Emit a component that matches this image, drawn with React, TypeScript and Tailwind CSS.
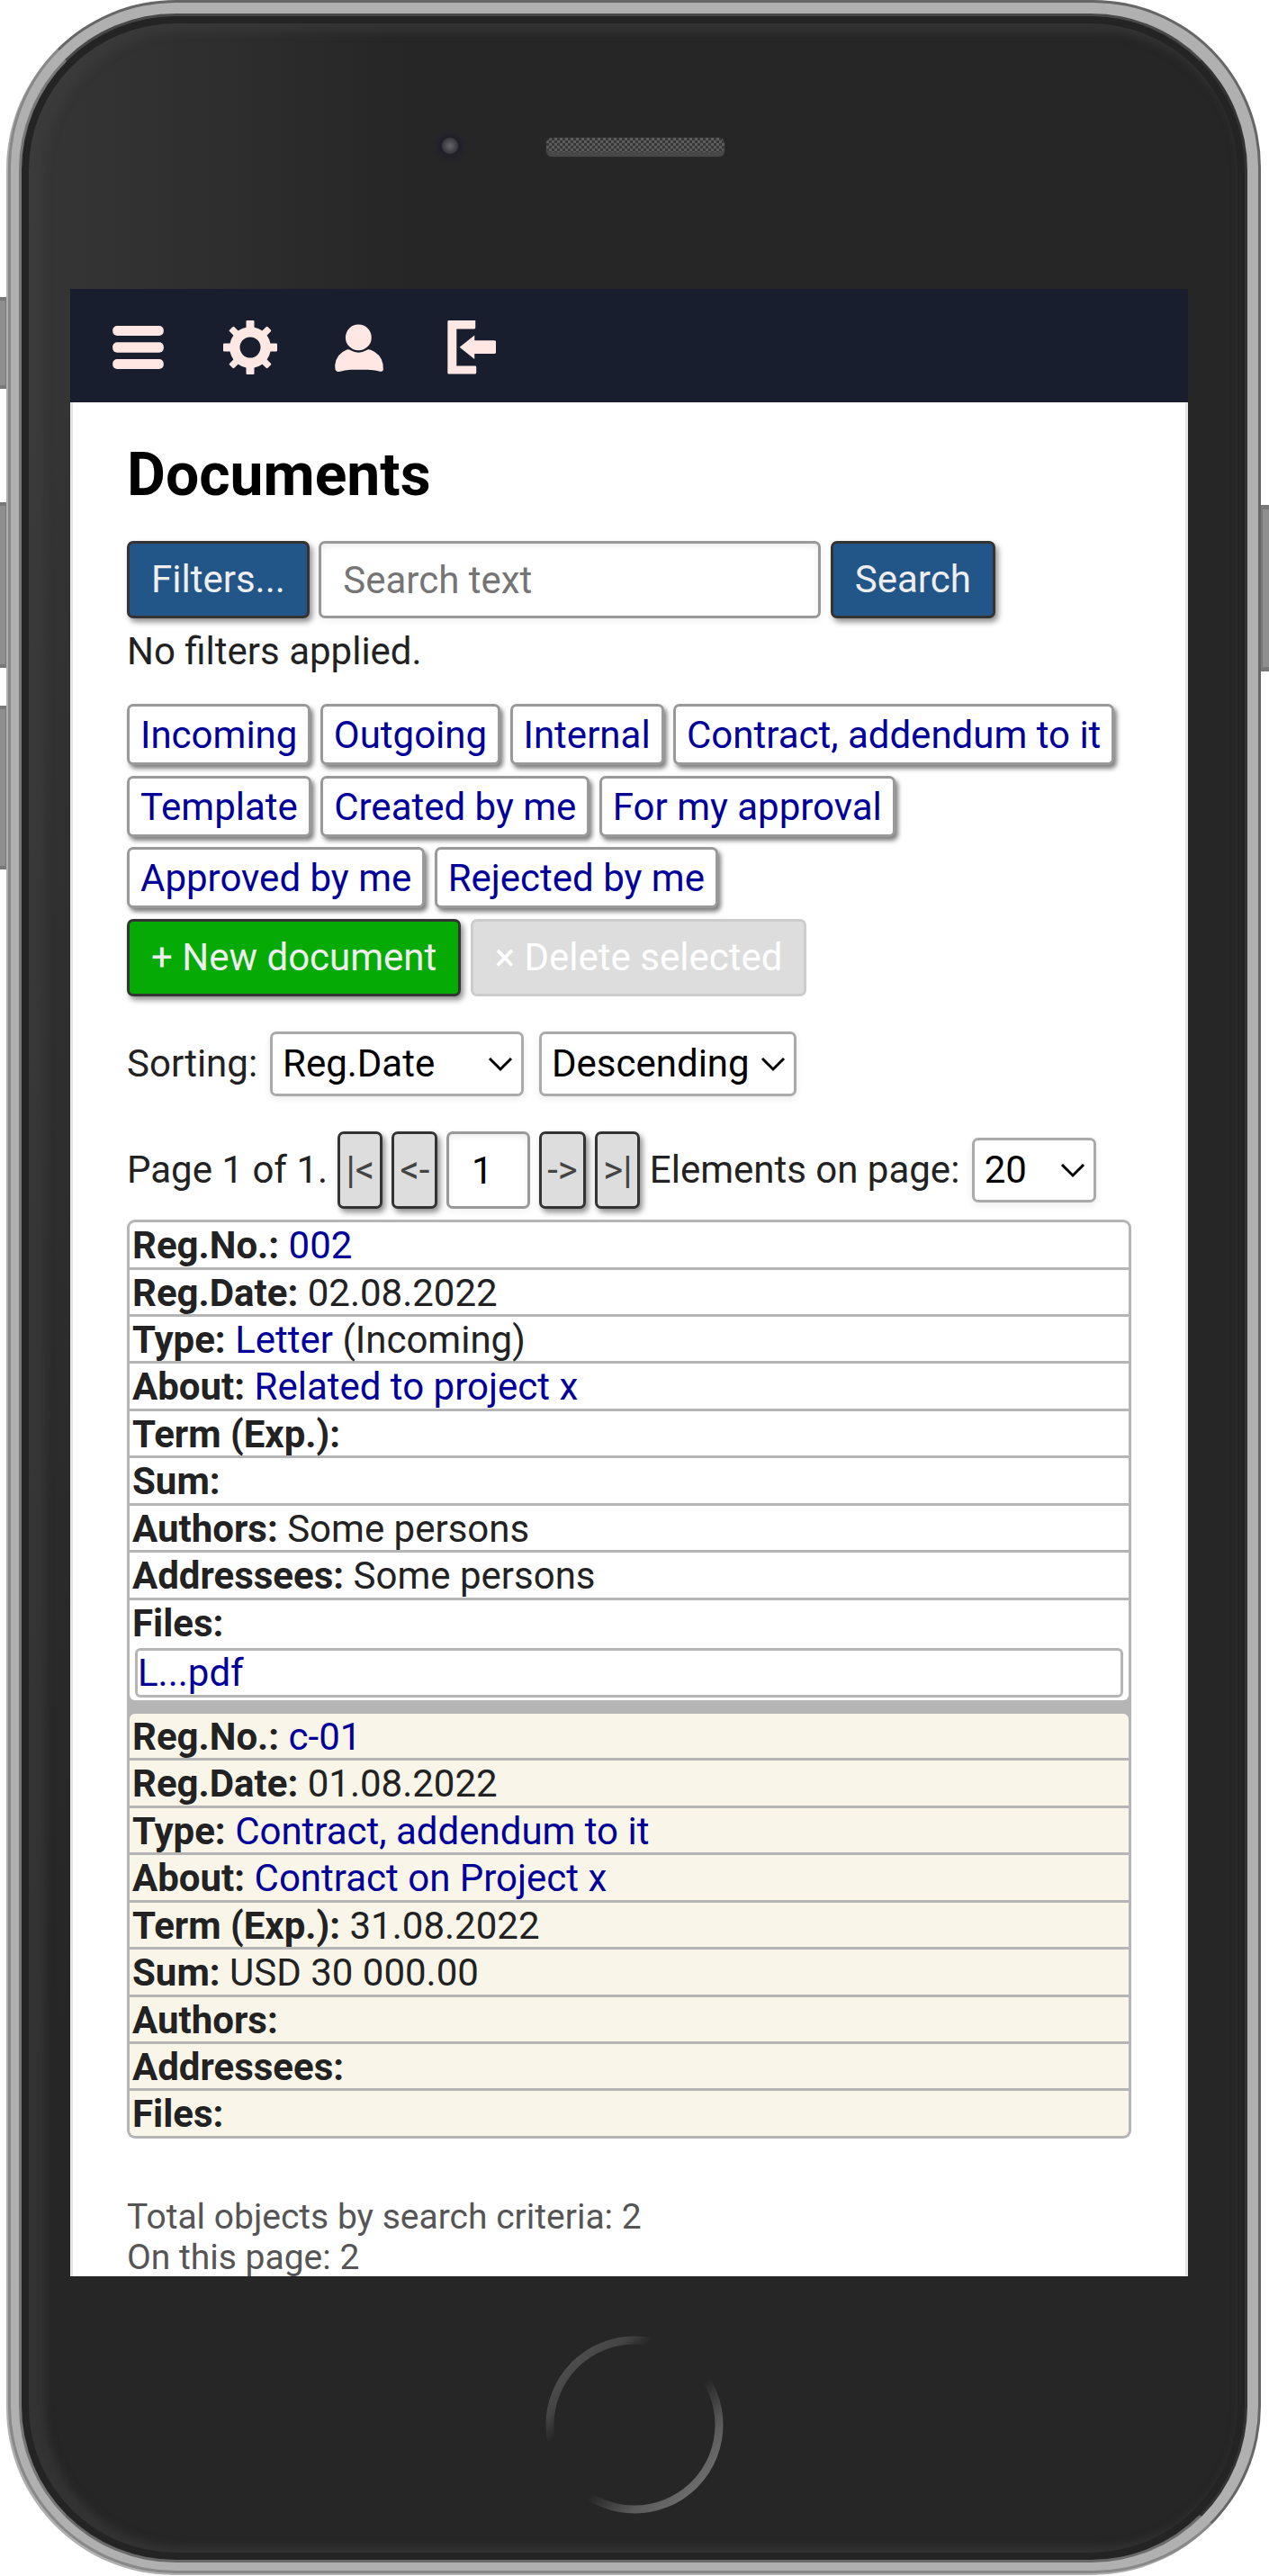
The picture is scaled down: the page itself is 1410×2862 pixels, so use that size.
import type { ReactNode } from "react";

const cx = (...parts: string[]) => parts.join(" ");

/* ---------- header icons ---------- */

function MenuIcon() {
  return (
    <svg className="h-[48px] w-[57px]" viewBox="45 66 170 144" fill="currentColor">
      <rect x="45" y="66" width="170" height="33" rx="15" />
      <rect x="45" y="121" width="170" height="34" rx="15" />
      <rect x="45" y="177" width="170" height="33" rx="15" />
    </svg>
  );
}

function GearIcon() {
  return (
    <svg className="ml-[66px] size-[60px]" viewBox="-90 -90 180 180" fill="currentColor">
      <circle r="51.5" fill="none" stroke="currentColor" strokeWidth="34" />
      {[0, 90, 180, 270].map((a) => (
        <rect key={a} x="-13.5" y="-90" width="27" height="30" rx="3" transform={`rotate(${a})`} />
      ))}
      {[45, 135, 225, 315].map((a) => (
        <rect key={a} x="-11" y="-90" width="22" height="32" rx="4" transform={`rotate(${a})`} />
      ))}
    </svg>
  );
}

function UserIcon() {
  return (
    <svg className="ml-[64px] h-[53px] w-[54px]" viewBox="786 58 162 160" fill="currentColor">
      <circle cx="865" cy="103" r="43.5" />
      <path d="M826 144 Q833 142 839 146 Q852 153 865 153.500 Q879 153 891 146 Q898 141 906 145 Q940 158 947 192 L948 212 Q947 219 937 217 Q912 211 896 211 L839 211 Q820 212 800 218 Q788 219 787 210 L786 196 Q790 158 826 144 Z" />
    </svg>
  );
}

function ExitIcon() {
  return (
    <svg className="ml-[70.5px] h-[60px] w-[54.500px]" viewBox="1160 48 164 180" fill="currentColor">
      <path d="M1165 48 H1254 V72 Q1254 76 1250 76 H1191 V200 H1253 Q1257 200 1257 204 V222 Q1257 227 1252 227 H1165 Q1161 227 1161 223 V52 Q1161 48 1165 48 Z" />
      <path d="M1201 137 L1251 97 V115 H1317 Q1323 115 1323 121 V153 Q1323 159 1317 159 H1251 V177 Z" />
    </svg>
  );
}

/* ---------- controls ---------- */

const buttonBase =
  "flex h-[86px] shrink-0 items-center justify-center rounded-[7px] border-[3px] whitespace-pre";
const raised = "shadow-[3px_4px_6px_rgba(0,0,0,0.45)]";

function Button({ className, children }: { className: string; children: ReactNode }) {
  return <button className={cx(buttonBase, className)}>{children}</button>;
}

const primary = cx("border-[#333] bg-[#225588] px-[24px] text-[#eee]", raised);
const pagerStyle = cx("border-[#333] bg-[#ddd] px-[6px] text-[#444]", raised);

function Chip({ children }: { children: ReactNode }) {
  return (
    <a className="flex h-[68px] items-center rounded-[7px] border-[3px] border-[#999] bg-white px-[12px] pt-[2px] text-[#000099] shadow-[3px_4px_5px_rgba(0,0,0,0.5)]">
      {children}
    </a>
  );
}

function Select({ className, children }: { className: string; children: ReactNode }) {
  return (
    <div
      className={cx(
        "flex h-[72px] shrink-0 items-center justify-between rounded-[7px] border-[3px] border-[#aaa] bg-white pr-[9px] pl-[11px] text-black shadow-[0_3px_8px_rgba(0,0,0,0.08)]",
        className,
      )}
    >
      <span>{children}</span>
      <svg className="h-[18px] w-[28px]" viewBox="0 0 28 18" fill="none" stroke="black" strokeWidth="3">
        <path d="M2 3 L14 15 L26 3" />
      </svg>
    </div>
  );
}

const inputStyle =
  "h-[86px] rounded-[7px] border-[3px] border-[#999] bg-white shadow-[inset_0_3px_6px_rgba(0,0,0,0.08),0_3px_8px_rgba(0,0,0,0.06)]";

/* ---------- records ---------- */

type Field = { label: string; link?: string; text?: string };

const letter: Field[] = [
  { label: "Reg.No.:", link: "002" },
  { label: "Reg.Date:", text: "02.08.2022" },
  { label: "Type:", link: "Letter", text: "(Incoming)" },
  { label: "About:", link: "Related to project x" },
  { label: "Term (Exp.):" },
  { label: "Sum:" },
  { label: "Authors:", text: "Some persons" },
  { label: "Addressees:", text: "Some persons" },
  { label: "Files:" },
];

const contract: Field[] = [
  { label: "Reg.No.:", link: "c-01" },
  { label: "Reg.Date:", text: "01.08.2022" },
  { label: "Type:", link: "Contract, addendum to it" },
  { label: "About:", link: "Contract on Project x" },
  { label: "Term (Exp.):", text: "31.08.2022" },
  { label: "Sum:", text: "USD 30 000.00" },
  { label: "Authors:" },
  { label: "Addressees:" },
  { label: "Files:" },
];

function Record({ fields, file, className }: { fields: Field[]; file?: string; className: string }) {
  return (
    <div className={cx("overflow-hidden rounded-[6px]", className)}>
      {fields.map((f) => (
        <div key={f.label} className="border-b-[3px] border-[#b5b5b5] px-[3px] last:border-b-0">
          <div className="h-[49.43px] leading-[51.43px]">
            <b>{f.label}</b>
            {f.link && <a className="text-[#000099]"> {f.link}</a>}
            {f.text && <span> {f.text}</span>}
          </div>
          {file && f.label === "Files:" && (
            <div className="mx-[3px] mt-[4px] mb-[3.5px] h-[55px] rounded-[6px] border-[3px] border-[#b5b5b5] leading-[49px] text-[#000099]">
              {file}
            </div>
          )}
        </div>
      ))}
    </div>
  );
}

/* ---------- page inside the phone ---------- */

function Screen() {
  return (
    <div className="ml-[54px] h-[2208px] w-[1242px] overflow-hidden bg-white text-[42px] leading-[50px] text-[#222]">
      <header className="flex h-[126px] items-center bg-[#181e2d] pt-[4px] pl-[47px] text-[#ffe8e3]">
        <MenuIcon />
        <GearIcon />
        <UserIcon />
        <ExitIcon />
      </header>

      <main className="h-[2082px] border-x-[3px] border-[#e6e6e6] px-[60px] pt-[42px]">
        <h1 className="h-[112px] text-[66px] leading-[78px] font-bold text-black">Documents</h1>

        <div className="flex">
          <Button className={primary}>Filters...</Button>
          <input
            className={cx(inputStyle, "mx-[10.5px] w-[558px] px-[24px] placeholder:text-[#757575]")}
            placeholder="Search text"
          />
          <Button className={primary}>Search</Button>
        </div>
        <p className="mt-[12px]">No filters applied.</p>

        <div className="mt-[33px] flex flex-wrap gap-x-[10.4px] gap-y-[11.6px]">
          <Chip>Incoming</Chip>
          <Chip>Outgoing</Chip>
          <Chip>Internal</Chip>
          <Chip>Contract, addendum to it</Chip>
          <Chip>Template</Chip>
          <Chip>Created by me</Chip>
          <Chip>For my approval</Chip>
          <Chip>Approved by me</Chip>
          <Chip>Rejected by me</Chip>
        </div>

        <div className="mt-[12px] flex gap-[10.4px]">
          <Button className={cx("border-[#333] bg-[#05aa05] px-[24px] text-[#eee]", raised)}>
            + New document
          </Button>
          <Button className="border-[#ccc] bg-[#ddd] px-[24px] text-white">× Delete selected</Button>
        </div>

        <div className="mt-[39px] flex items-center">
          <span className="w-[159px]">Sorting:</span>
          <Select className="w-[282px]">Reg.Date</Select>
          <Select className="ml-[17px] w-[286px]">Descending</Select>
        </div>

        <div className="mt-[39px] flex items-center gap-[10.4px] whitespace-nowrap">
          <span className="mr-[1px]">Page 1 of 1.</span>
          <Button className={pagerStyle}>{"|<"}</Button>
          <Button className={pagerStyle}>{"<-"}</Button>
          <input
            className={cx(inputStyle, "-mx-[0.5px] w-[93px] pr-[14px] text-center text-black")}
            defaultValue="1"
          />
          <Button className={pagerStyle}>{"->"}</Button>
          <Button className={pagerStyle}>{">|"}</Button>
          <span>Elements on page:</span>
          <Select className="ml-[3px] w-[138px]">20</Select>
        </div>

        <div className="mt-[12px] flex flex-col gap-[14.5px] rounded-[9px] bg-[#b5b5b5] p-[3px]">
          <Record fields={letter} file="L...pdf" className="bg-white" />
          <Record fields={contract} className="bg-[#f9f6e9]" />
        </div>

        <footer className="mt-[65px] text-[39px] leading-[45px] text-[#555]">
          <p>Total objects by search criteria: 2</p>
          <p>On this page: 2</p>
        </footer>
      </main>
    </div>
  );
}

/* ---------- phone body ---------- */

function HomeButton() {
  return (
    <svg className="ml-[582px] size-[200px]" viewBox="0 0 200 200" fill="none">
      <defs>
        <linearGradient id="ring" x1="0" y1="0" x2="1" y2="1">
          <stop offset="0.14" stopColor="#4c4c4c" />
          <stop offset="0.22" stopColor="#444444" />
          <stop offset="0.3" stopColor="#262626" />
          <stop offset="0.58" stopColor="#262626" />
          <stop offset="0.75" stopColor="#5a5a5a" />
          <stop offset="0.87" stopColor="#6c6c6c" />
        </linearGradient>
      </defs>
      <circle cx="99" cy="100" r="94" stroke="url(#ring)" strokeWidth="9" />
    </svg>
  );
}

const sideKey = "absolute bg-[#8e8e8e] border-[#787878]";

export default function App() {
  return (
    <div className="relative h-[2862px] w-[1410px] overflow-hidden bg-white font-[Roboto,sans-serif]">
      <div className={cx(sideKey, "top-[330px] left-0 h-[102px] w-[9px] border-y-[4px] border-r-[3px]")} />
      <div className={cx(sideKey, "top-[558px] left-0 h-[184px] w-[9px] border-y-[4px] border-r-[3px]")} />
      <div className={cx(sideKey, "top-[784px] left-0 h-[182px] w-[9px] border-y-[4px] border-r-[3px]")} />
      <div className={cx(sideKey, "top-[561px] left-[1400px] h-[185px] w-[10px] border-y-[5px] border-l-[3px]")} />

      <div className="relative ml-[9px] h-[2859px] w-[1392px] rounded-[186px] border-[3px] border-t-[#666] border-r-[#666] border-b-[#888] border-l-[#888] bg-[#b0b0b0] pt-[12px] pr-[12px] pb-[9px] pl-[9px] shadow-[-2px_2px_0_#b0b0b0]">
        <div className="relative h-full rounded-[174px] border-[3px] border-t-[#484848] border-r-[#333] border-b-[#6a6a6a] border-l-[#777] bg-[linear-gradient(to_bottom,transparent_15%,#262626_80%),linear-gradient(to_right,#363636,#262626_430px)] shadow-[inset_0_0_0_8px_#242424,inset_10px_2px_10px_16px_rgba(64,64,64,0.5)]">
          <div className="relative h-[303px]">
            <div className="absolute top-[124px] left-[456px] size-[40px] rounded-full bg-[radial-gradient(circle,#66666b_0,#4a4a50_5px,#3b3b42_8px,#1f1e26_10px,#24232a_14px,transparent_20px)]" />
            <div className="absolute top-[135px] left-[583px] h-[21px] w-[198px] rounded-[6px] bg-[#444] bg-[repeating-conic-gradient(#5c5c5c_0_25%,#383838_0_50%)] bg-[length:6px_6px] shadow-[inset_0_-5px_0_#484848,0_0_3px_#333]" />
          </div>
          <Screen />
          <div className="pt-[65px]">
            <HomeButton />
          </div>
        </div>
      </div>
    </div>
  );
}
